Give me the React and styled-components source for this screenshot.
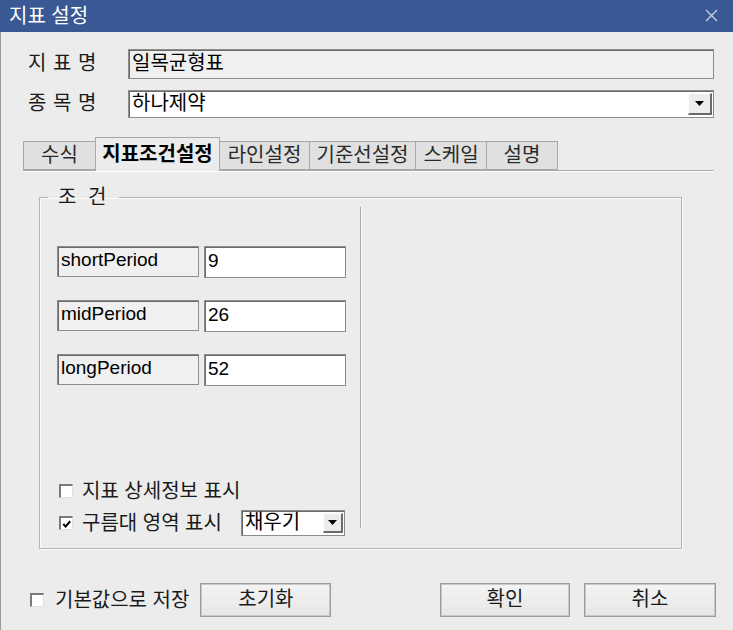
import styled, { createGlobalStyle } from 'styled-components'

const GlobalStyle = createGlobalStyle`
  html, body {
    margin: 0;
    padding: 0;
    background: #ececec;
  }
  * {
    box-sizing: border-box;
  }
`;

const FONT = `"Liberation Sans", "Noto Sans CJK KR", sans-serif`;

const params = [
  { name: 'shortPeriod', value: '9' },
  { name: 'midPeriod', value: '26' },
  { name: 'longPeriod', value: '52' },
];

const tabs = [
  { label: '수식', width: 73 },
  { label: '지표조건설정', width: 125, active: true },
  { label: '라인설정', width: 91 },
  { label: '기준선설정', width: 107 },
  { label: '스케일', width: 72 },
  { label: '설명', width: 72 },
];

const DownArrow = () => (
  <svg width="9" height="5" viewBox="0 0 9 5">
    <polygon points="0,0 9,0 4.5,5" fill="#000" />
  </svg>
);

const CheckMark = () => (
  <svg width="12" height="12" viewBox="0 0 12 12">
    <path d="M2.5 6 L5 8.8 L10 3" fill="none" stroke="#000" strokeWidth="2.2" />
  </svg>
);

const App = () => {
  return (
    <>
      <GlobalStyle />
      <Window>
        <TitleBar>
          지표 설정
          <CloseButton>
            <svg width="13" height="13" viewBox="0 0 13 13">
              <path d="M1 1 L12 12 M12 1 L1 12" stroke="#c9d1e2" strokeWidth="1.3" />
            </svg>
          </CloseButton>
        </TitleBar>
        <Body>
          <FieldRow $height={30}>
            <FieldLabel>지 표 명</FieldLabel>
            <TextBox $readonly>일목균형표</TextBox>
          </FieldRow>
          <FieldRow $height={28} $gap={11}>
            <FieldLabel>종 목 명</FieldLabel>
            <TextBox>
              하나제약
              <DropButton $width={24}>
                <DownArrow />
              </DropButton>
            </TextBox>
          </FieldRow>

          <TabStrip>
            {tabs.map((t) => (
              <Tab key={t.label} $active={t.active} style={{ width: t.width }}>
                {t.label}
              </Tab>
            ))}
          </TabStrip>

          <GroupBox>
            <Legend>조 건</Legend>
            <GroupContent>
              <LeftPane>
                <ParamList>
                  {params.map((p) => (
                    <ParamRow key={p.name}>
                      <ParamName>{p.name}</ParamName>
                      <ParamInput>{p.value}</ParamInput>
                    </ParamRow>
                  ))}
                </ParamList>
                <CheckArea>
                  <CheckRow $height={20}>
                    <CheckBox />
                    <CheckText>지표 상세정보 표시</CheckText>
                  </CheckRow>
                  <CheckRow $height={26}>
                    <CheckBox>
                      <CheckMark />
                    </CheckBox>
                    <CheckText>구름대 영역 표시</CheckText>
                    <SmallCombo>
                      채우기
                      <DropButton $width={20}>
                        <DownArrow />
                      </DropButton>
                    </SmallCombo>
                  </CheckRow>
                </CheckArea>
              </LeftPane>
              <Divider />
            </GroupContent>
          </GroupBox>

          <BottomRow>
            <CheckBox $ml={2} />
            <CheckText $ml={11}>기본값으로 저장</CheckText>
            <Button $ml={11} $width={131}>초기화</Button>
            <Spacer />
            <Button $width={130}>확인</Button>
            <Button $ml={14} $width={132}>취소</Button>
          </BottomRow>
        </Body>
      </Window>
    </>
  );
};

export default App;

const Window = styled.div`
  width: 733px;
  height: 630px;
  display: flex;
  flex-direction: column;
  background: #ececec;
  font-family: ${FONT};
  font-size: 20px;
  color: #000;
  overflow: hidden;
`;

const TitleBar = styled.div`
  height: 32px;
  flex-shrink: 0;
  display: flex;
  align-items: center;
  padding-left: 9px;
  padding-bottom: 1px;
  background: #3a5894;
  color: #fff;
  font-size: 20px;
  line-height: 1;
`;

const CloseButton = styled.div`
  margin-left: auto;
  width: 44px;
  height: 32px;
  display: flex;
  align-items: center;
  justify-content: center;
`;

const Body = styled.div`
  flex: 1;
  display: flex;
  flex-direction: column;
  padding: 17px 19px 0 27px;
  border-left: 1px solid #9a9a9a;
`;

const FieldRow = styled.div`
  display: flex;
  align-items: center;
  height: ${(p) => p.$height}px;
  margin-top: ${(p) => p.$gap || 0}px;
`;

const FieldLabel = styled.div`
  width: 100px;
  flex-shrink: 0;
  letter-spacing: 0.5px;
  line-height: 20px;
  margin-top: -2px;
  color: #1a1a1a;
`;

const TextBox = styled.div`
  flex: 1;
  height: 100%;
  display: flex;
  align-items: center;
  padding-left: 3px;
  background: ${(p) => (p.$readonly ? '#f0f0f0' : '#fff')};
  border: 1px solid #8c8c8c;
  box-shadow: inset 1px 1px 0 #6a6a6a;
  line-height: 20px;
  padding-bottom: 2px;
`;

const DropButton = styled.div`
  margin-left: auto;
  width: ${(p) => p.$width}px;
  height: calc(100% - 2px);
  margin-top: 2px;
  margin-right: 1px;
  display: flex;
  align-items: center;
  justify-content: center;
  background: #ececec;
  border-top: 1px solid #fff;
  border-left: 1px solid #fff;
  border-right: 2px solid #6a6a6a;
  border-bottom: 2px solid #6a6a6a;
`;

const TabStrip = styled.div`
  display: flex;
  align-items: flex-end;
  height: 33px;
  margin-top: 20px;
  margin-left: -5px;
  border-bottom: 1px solid #a8a8a8;
  box-shadow: 0 1px 0 #fff;
`;

const Tab = styled.div`
  position: relative;
  height: ${(p) => (p.$active ? 34 : 29)}px;
  margin-bottom: ${(p) => (p.$active ? -1 : 0)}px;
  display: flex;
  align-items: center;
  justify-content: center;
  background: ${(p) => (p.$active ? '#ececec' : '#e0e0e0')};
  border: 1px solid #a8a8a8;
  border-bottom: ${(p) => (p.$active ? 'none' : '1px solid #a8a8a8')};
  margin-right: -1px;
  z-index: ${(p) => (p.$active ? 1 : 0)};
  font-weight: ${(p) => (p.$active ? 700 : 400)};
  color: ${(p) => (p.$active ? '#000' : '#2a2a2a')};
  line-height: 20px;
  padding-bottom: 2px;
`;

const GroupBox = styled.fieldset`
  margin: 17px 0 0 11px;
  padding: 0;
  width: 643px;
  border: 1px solid #b4b4b4;
  box-shadow: inset 1px 1px 0 #fafafa, 1px 1px 0 #fafafa;
  min-width: 0;
`;

const Legend = styled.legend`
  margin-left: 8px;
  padding: 0 10px;
  line-height: 18px;
  letter-spacing: 3px;
  color: #1a1a1a;
`;

const GroupContent = styled.div`
  display: flex;
  height: 342px;
`;

const LeftPane = styled.div`
  width: 320px;
  display: flex;
  flex-direction: column;
  padding: 40px 0 12px 17px;
`;

const Divider = styled.div`
  width: 2px;
  margin: 1px 0 20px;
  border-left: 1px solid #a8a8a8;
  border-right: 1px solid #fafafa;
`;

const ParamList = styled.div`
  display: flex;
  flex-direction: column;
  gap: 22px;
`;

const ParamRow = styled.div`
  display: flex;
  gap: 5px;
  height: 32px;
`;

const ParamName = styled.div`
  width: 142px;
  height: 31px;
  padding: 0 0 3px 3px;
  display: flex;
  align-items: center;
  background: #f0f0f0;
  border: 1px solid #8c8c8c;
  box-shadow: inset 1px 1px 0 #6a6a6a;
  font-size: 19px;
  line-height: 20px;
`;

const ParamInput = styled(ParamName)`
  height: 32px;
  background: #fff;
`;

const CheckArea = styled.div`
  margin-top: auto;
  display: flex;
  flex-direction: column;
  gap: 9px;
`;

const CheckRow = styled.div`
  display: flex;
  align-items: center;
  height: ${(p) => p.$height}px;
`;

const CheckBox = styled.span`
  width: 14px;
  height: 14px;
  flex-shrink: 0;
  margin-left: ${(p) => (p.$ml != null ? p.$ml : 2)}px;
  display: flex;
  align-items: center;
  justify-content: center;
  background: #fff;
  border-top: 2px solid #7a7a7a;
  border-left: 2px solid #7a7a7a;
  border-right: 1px solid #e0e0e0;
  border-bottom: 1px solid #e0e0e0;
`;

const CheckText = styled.span`
  margin-left: ${(p) => (p.$ml != null ? p.$ml : 9)}px;
  line-height: 20px;
  white-space: nowrap;
  color: #1a1a1a;
`;

const SmallCombo = styled.div`
  margin-left: 19px;
  width: 104px;
  height: 26px;
  display: flex;
  align-items: center;
  padding-left: 3px;
  padding-bottom: 2px;
  background: #fff;
  border: 1px solid #8c8c8c;
  box-shadow: inset 1px 1px 0 #6a6a6a;
  line-height: 20px;
`;

const BottomRow = styled.div`
  display: flex;
  align-items: center;
  height: 34px;
  margin-top: 34px;
  margin-right: -2px;
`;

const Spacer = styled.div`
  flex: 1;
`;

const Button = styled.div`
  width: ${(p) => p.$width}px;
  height: 34px;
  margin-left: ${(p) => p.$ml || 0}px;
  display: flex;
  align-items: center;
  justify-content: center;
  padding-bottom: 2px;
  background: linear-gradient(#f4f4f4, #e6e6e6);
  border: 1px solid #9a9a9a;
  box-shadow: inset 0 0 0 1px #c8c8c8;
  line-height: 20px;
  color: #1a1a1a;
`;
